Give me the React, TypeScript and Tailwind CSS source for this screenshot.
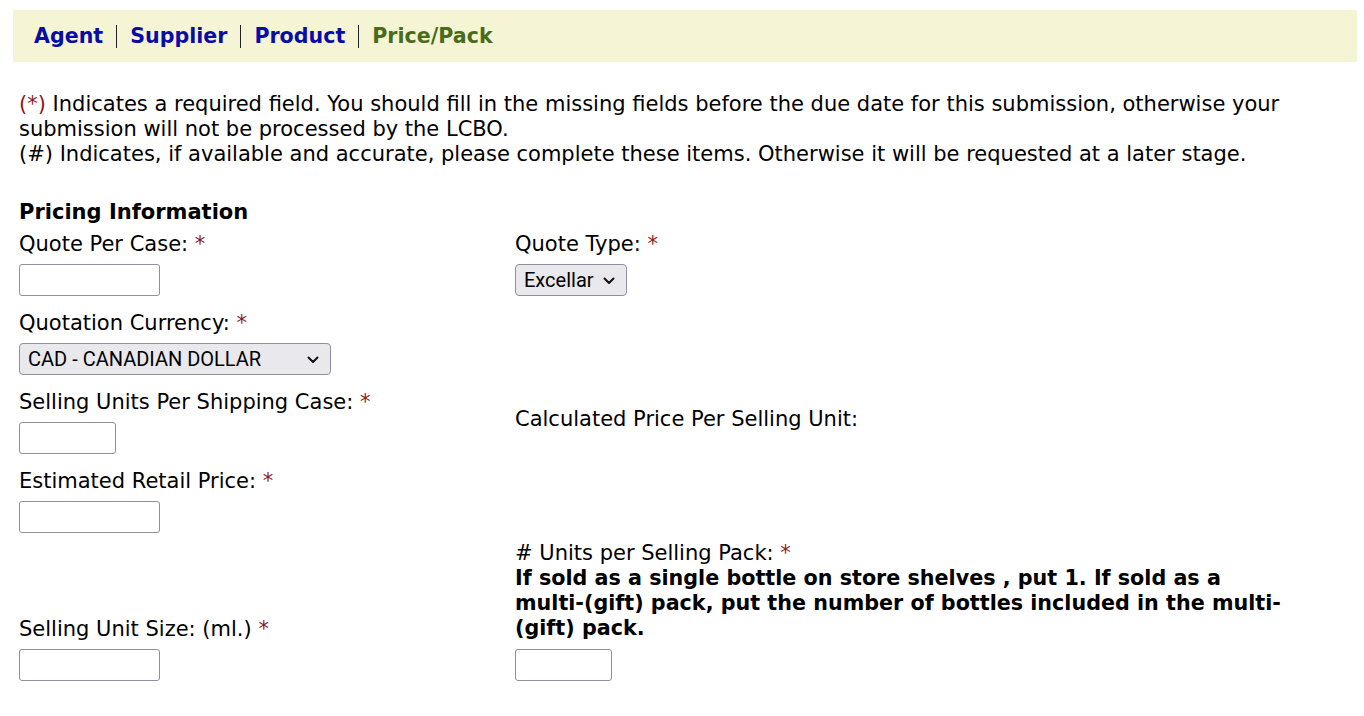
import React from 'react';

const Req = () => <span className="text-[#8b1a1a]"> *</span>;

const Chevron = () => (
  <svg
    className="pointer-events-none absolute right-[12px] top-[13px]"
    width="12"
    height="8"
    viewBox="0 0 12 8"
    fill="none"
  >
    <path d="M1.5 1.5 L6 6 L10.5 1.5" stroke="#111" strokeWidth="2" strokeLinecap="round" strokeLinejoin="round" />
  </svg>
);

const Select = ({ value, width }: { value: string; width: string }) => (
  <span className={`relative inline-block ${width}`}>
    <select
      defaultValue={value}
      className="h-[32px] w-full appearance-none rounded-[4px] border border-[#8f8f9d] bg-[#e9e9ed] pl-[8px] pr-[30px] text-[20px] leading-[24px] text-black font-['Roboto','Liberation_Sans',sans-serif]"
    >
      <option>{value}</option>
    </select>
    <Chevron />
  </span>
);

const TextInput = ({ width }: { width: string }) => (
  <input type="text" className={`block h-[32px] ${width} rounded-[3px] border border-[#8f8f9d] bg-white`} />
);

export default function App() {
  const tabs = [
    { label: 'Agent', active: false },
    { label: 'Supplier', active: false },
    { label: 'Product', active: false },
    { label: 'Price/Pack', active: true },
  ];

  return (
    <div className="min-h-screen bg-white pt-[10px] text-[21px] leading-[25px] text-black font-['DejaVu_Sans','Verdana',sans-serif]">
      <div className="ml-[13px] mr-[7px] h-[52px] bg-[#f5f5d6] pl-[21px] flex items-center text-[20.6px]">
        {tabs.map((t, i) => (
          <React.Fragment key={t.label}>
            {i > 0 && <span className="mx-[13px] h-[23px] w-px bg-[#222]" />}
            <a
              href="#"
              className={`font-bold ${t.active ? 'text-[#4a6b1a]' : 'text-[#0b0ba6]'}`}
            >
              {t.label}
            </a>
          </React.Fragment>
        ))}
      </div>

      <div className="px-[19px]">
        <p className="mt-[30px]">
          <span className="text-[#8b1a1a]">(*)</span> Indicates a required field. You should fill in the missing
          fields before the due date for this submission, otherwise your submission will not be processed by the LCBO.
          <br />
          (#) Indicates, if available and accurate, please complete these items. Otherwise it will be requested at a
          later stage.
        </p>

        <h2 className="mt-[33px] font-bold">Pricing Information</h2>

        <div className="grid grid-cols-[496px_1fr] mt-[7px]">
          {/* row 1 */}
          <div>
            <div>
              Quote Per Case:<Req />
            </div>
            <TextInput width="w-[141px] mt-[7px]" />
          </div>
          <div>
            <div>
              Quote Type:<Req />
            </div>
            <div className="mt-[7px] leading-none">
              <Select value="Excellar" width="w-[112px]" />
            </div>
          </div>

          {/* row 2 */}
          <div className="mt-[15px]">
            <div>
              Quotation Currency:<Req />
            </div>
            <div className="mt-[7px] leading-none">
              <Select value="CAD - CANADIAN DOLLAR" width="w-[312px]" />
            </div>
          </div>
          <div />

          {/* row 3 */}
          <div className="mt-[15px]">
            <div>
              Selling Units Per Shipping Case:<Req />
            </div>
            <TextInput width="w-[97px] mt-[7px]" />
          </div>
          <div className="mt-[15px] pt-[17px]">Calculated Price Per Selling Unit:</div>

          {/* row 4 */}
          <div className="mt-[15px]">
            <div>
              Estimated Retail Price:<Req />
            </div>
            <TextInput width="w-[141px] mt-[7px]" />
          </div>
          <div />

          {/* row 5 */}
          <div className="mt-[8px] flex flex-col justify-end">
            <div>
              Selling Unit Size: (ml.)<Req />
            </div>
            <TextInput width="w-[141px] mt-[7px]" />
          </div>
          <div className="mt-[8px]">
            <div>
              # Units per Selling Pack:<Req />
            </div>
            <div className="font-bold text-[20.7px] whitespace-nowrap">
              If sold as a single bottle on store shelves , put 1. If sold as a
              <br />
              multi-(gift) pack, put the number of bottles included in the multi-
              <br />
              (gift) pack.
            </div>
            <TextInput width="w-[97px] mt-[8px]" />
          </div>
        </div>
      </div>
    </div>
  );
}
